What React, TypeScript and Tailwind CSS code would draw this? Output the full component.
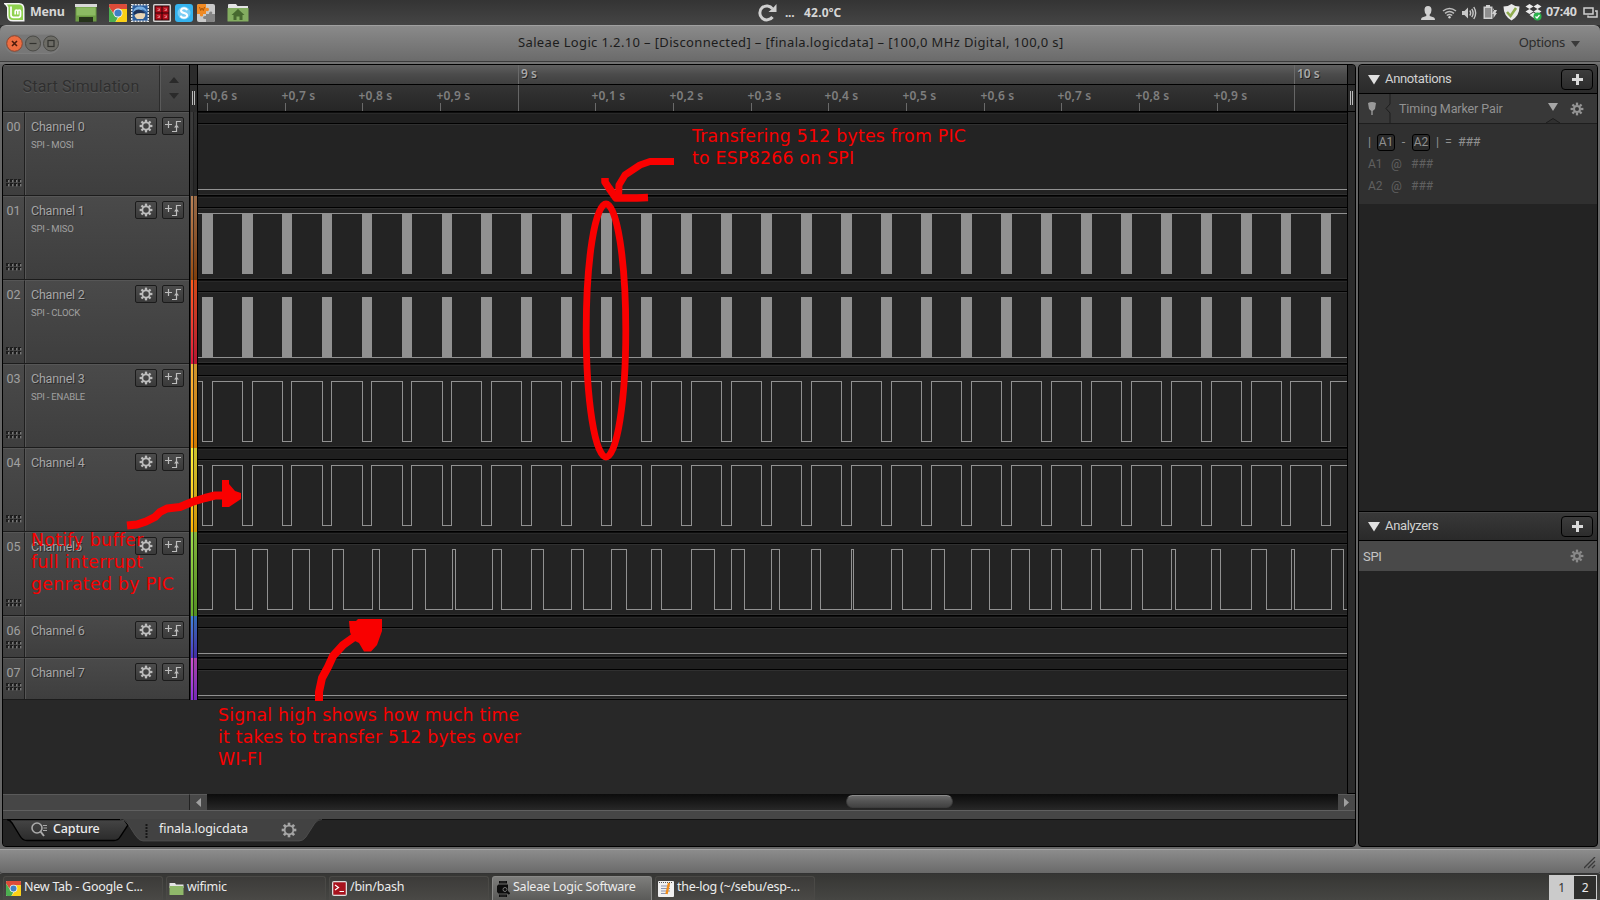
import React from "react";

const bursts: [number, number][] = [
  [202, 213], [242, 253], [282, 292], [322, 332], [362, 372], [402, 412], [442, 452],
  [481, 492], [521, 532], [561, 572], [601, 612], [641, 652], [681, 692], [721, 732],
  [761, 772], [801, 812], [841, 852], [881, 892], [921, 932], [961, 972], [1001, 1012],
  [1041, 1052], [1081, 1092], [1121, 1132], [1161, 1172], [1201, 1212], [1241, 1252],
  [1281, 1291], [1321, 1331],
];

const wifiPulses: [number, number][] = [
  [212, 235], [252, 267], [292, 309], [332, 343], [372, 379], [412, 425], [452, 455],
  [492, 501], [531, 543], [571, 583], [611, 626], [651, 661], [691, 714], [731, 744],
  [771, 779], [811, 820], [851, 853], [891, 902], [931, 944], [971, 989], [1011, 1029],
  [1051, 1061], [1091, 1100], [1131, 1142], [1171, 1175], [1211, 1220], [1251, 1266],
  [1291, 1294], [1331, 1343],
];

const ORIGIN = 198;

function highPulsesPath(pulses: [number, number][]) {
  let d = "M0 77.5";
  for (const [a, b] of pulses) {
    d += `H${a - ORIGIN + 0.5}V17.5H${b - ORIGIN + 0.5}V77.5`;
  }
  return d + "H1150";
}

function lowPulsesPath(pulses: [number, number][]) {
  let d = "M0 17.5";
  for (const [a, b] of pulses) {
    d += `H${a - ORIGIN + 0.5}V77.5H${b - 1 - ORIGIN + 0.5}V17.5`;
  }
  return d + "H1150";
}

type Kind = "flat" | "miso" | "clock" | "enable" | "wifi";

interface Channel {
  id: string;
  name: string;
  sub?: string;
  kind: Kind;
  small?: boolean;
  strip: string;
}

const channels: Channel[] = [
  { id: "00", name: "Channel 0", sub: "SPI - MOSI", kind: "flat", strip: "from-[#3c3c3c] to-[#2e2e2e]" },
  { id: "01", name: "Channel 1", sub: "SPI - MISO", kind: "miso", strip: "from-[#b98257] to-[#9a4c0c]" },
  { id: "02", name: "Channel 2", sub: "SPI - CLOCK", kind: "clock", strip: "from-[#ff5a1c] to-[#e0163c]" },
  { id: "03", name: "Channel 3", sub: "SPI - ENABLE", kind: "enable", strip: "from-[#fbb638] to-[#ff9500]" },
  { id: "04", name: "Channel 4", kind: "enable", strip: "from-[#fbf03a] to-[#ffb400]" },
  { id: "05", name: "Channel5", kind: "wifi", strip: "from-[#9fdb4a] to-[#66b02a]" },
  { id: "06", name: "Channel 6", kind: "flat", small: true, strip: "from-[#3f84dd] to-[#4f35c8]" },
  { id: "07", name: "Channel 7", kind: "flat", small: true, strip: "from-[#cf50d0] to-[#8f2fe0]" },
];

function Gear({ size = 14, color = "#bdbdbd", hole = 3.6, ring = 1.7 }: { size?: number; color?: string; hole?: number; ring?: number }) {
  return (
    <svg width={size} height={size} viewBox="-7 -7 14 14" className="shrink-0">
      <circle r={hole} fill="none" stroke={color} strokeWidth={ring} />
      {[0, 45, 90, 135, 180, 225, 270, 315].map((a) => (
        <rect key={a} x="-1.15" y="-6.4" width="2.3" height="2.4" fill={color} transform={`rotate(${a})`} />
      ))}
    </svg>
  );
}

function Dots() {
  return (
    <svg width="16" height="8" className="mb-px">
      {[0, 4, 8, 12].map((x) =>
        [0, 4].map((y) => (
          <g key={`${x}-${y}`}>
            <rect x={x} y={y} width="3" height="3" fill="#1d1d1d" />
            <rect x={x + 2} y={y + 1} width="1.4" height="2.4" fill="#777" />
          </g>
        )),
      )}
    </svg>
  );
}

function SmallButton({ children }: { children: React.ReactNode }) {
  return (
    <div className="flex h-[18px] w-[22px] items-center justify-center rounded-[2px] border border-[#1b1b1b] bg-linear-to-b from-[#4c4c4c] to-[#3a3a3a]">
      {children}
    </div>
  );
}

function ChannelHeader({ c }: { c: Channel }) {
  return (
    <div className={`flex border-b border-[#1c1c1c] bg-linear-to-b from-[#4a4a4a] to-[#3e3e3e] ${c.small ? "h-[42px]" : "h-[84px]"}`}>
      <div className="flex w-[22px] shrink-0 flex-col items-center justify-between border-r border-[#1f1f1f] border-t border-t-[#565656] pb-[7px] pt-[5px] text-[12.5px] leading-[17px] text-[#a0a0a0]">
        <span className={c.small ? "h-[14px]" : ""}>{c.id}</span>
        <Dots />
      </div>
      <div className="flex min-w-0 flex-1 justify-between border-l border-t border-[#565656] pl-[5px] pr-[5px]">
        <div className="pt-[5px]">
          <div className="whitespace-nowrap text-[12.5px] leading-[17px] tracking-[-0.2px] text-[#a6a6a6] [text-shadow:1px_1px_0_#2c2c2c]">{c.name}</div>
          {c.sub && <div className="mt-[4px] whitespace-nowrap text-[9.5px] leading-[12px] tracking-[-0.2px] text-[#a0a0a0]">{c.sub}</div>}
        </div>
        <div className="flex gap-[5px] pt-[4px]">
          <SmallButton><Gear size={14} /></SmallButton>
          <SmallButton>
            <svg width="18" height="14" viewBox="0 0 18 14" fill="none" stroke="#bdbdbd" strokeWidth="1.2">
              <path d="M1 5.5H8M4.500 2V9M8 12.500H12.500V2.500H17" />
              <path d="M10 8.500L12.500 5.500L15 8.500Z" fill="#bdbdbd" stroke="none" />
            </svg>
          </SmallButton>
        </div>
      </div>
    </div>
  );
}

function Wave({ c }: { c: Channel }) {
  const h = c.small ? 42 : 84;
  const low = c.small ? 37.5 : 77.5;
  return (
    <svg width="1149" height={h} className="block bg-[#232323]" shapeRendering="crispEdges">
      <rect width="1149" height="11" fill="#1f1f1f" />
      <rect width="1149" height="1" fill="#0e0e0e" />
      <rect y="1" width="1149" height="1" fill="#292929" />
      <rect y="11" width="1149" height="1" fill="#000" />
      <rect y="12" width="1149" height="1" fill="#303030" />
      <rect y={h - 2} width="1149" height="1" fill="#303030" />
      <rect y={h - 1} width="1149" height="1" fill="#000" />
      {c.kind === "flat" && <path d={`M0 ${low}H1149`} stroke="#919191" />}
      {(c.kind === "miso" || c.kind === "clock") && (
        <>
          <path d={c.kind === "miso" ? "M0 17.500H1149" : "M0 77.500H1149"} stroke="#919191" />
          {bursts.map(([a, b]) => (
            <rect key={a} x={a - ORIGIN} y="17" width={b - a} height="61" fill="#919191" />
          ))}
        </>
      )}
      {c.kind === "enable" && <path d={lowPulsesPath(bursts)} stroke="#919191" fill="none" />}
      {c.kind === "wifi" && <path d={highPulsesPath(wifiPulses)} stroke="#919191" fill="none" />}
    </svg>
  );
}

const minor: { label: string; w: string }[] = [
  { label: "+0,6 s", w: "w-[78px]" },
  { label: "+0,7 s", w: "w-[77px]" },
  { label: "+0,8 s", w: "w-[78px]" },
  { label: "+0,9 s", w: "w-[78px]" },
  { label: "", w: "w-[77px]" },
  { label: "+0,1 s", w: "w-[78px]" },
  { label: "+0,2 s", w: "w-[78px]" },
  { label: "+0,3 s", w: "w-[77px]" },
  { label: "+0,4 s", w: "w-[78px]" },
  { label: "+0,5 s", w: "w-[78px]" },
  { label: "+0,6 s", w: "w-[77px]" },
  { label: "+0,7 s", w: "w-[78px]" },
  { label: "+0,8 s", w: "w-[78px]" },
  { label: "+0,9 s", w: "w-[77px]" },
  { label: "", w: "w-[40px]" },
];

function Ruler() {
  return (
    <div className="font-['Noto_Sans'] text-[12px] font-semibold">
      <div className="flex h-[19px] bg-linear-to-b from-[#606060] from-0% via-[#4b4b4b] via-50% to-[#3f3f3f] pl-[320px] leading-[18px] text-[#a8a8a8]">
        <div className="w-[776px] border-l border-[#6a6a6a] pl-[2px] [text-shadow:1px_1px_0_#222]">9 s</div>
        <div className="border-l border-[#6a6a6a] pl-[2px] [text-shadow:1px_1px_0_#222]">10 s</div>
      </div>
      <div className="flex h-[28px] overflow-hidden border-y border-black bg-linear-to-b from-[#343434] to-[#262626] pl-[6px]">
        {minor.map((m, i) => (
          <div key={i} className={`shrink-0 ${m.w}`}>
            {m.label ? (
              <>
                <div className="-ml-[0.500px] h-[18px] whitespace-nowrap pt-px text-[12px] leading-[20px] tracking-[0.15px] text-[#7e7e7e]">{m.label}</div>
                <div className="ml-[3px] h-[8px] w-px bg-[#6a6a6a]" />
              </>
            ) : (
              <div className="ml-[3px] h-[26px] w-px bg-[#666]" />
            )}
          </div>
        ))}
      </div>
    </div>
  );
}

function Chrome({ size }: { size: number }) {
  return (
    <svg width={size} height={size} viewBox="0 0 18 18">
      <rect width="18" height="18" rx="1.5" fill="#e8e8e8" />
      <path d="M0 1.500Q0 0 1.500 0H16.500Q18 0 18 1.500V5H9L5.500 11L0 3Z" fill="#dd4b39" />
      <path d="M0 3L5.500 11.500L9 13L6.500 18H1.500Q0 18 0 16.500Z" fill="#4caf50" />
      <path d="M18 5V16.500Q18 18 16.500 18H6.500L12.500 10L9 5Z" fill="#fcd116" />
      <circle cx="9" cy="9" r="4.600" fill="#f1f1f1" />
      <circle cx="9" cy="9" r="3.600" fill="#3f7fc4" />
    </svg>
  );
}

function TopPanel() {
  return (
    <div className="flex h-[25px] shrink-0 items-center bg-linear-to-b from-[#343434] to-[#454545] font-['Noto_Sans'] text-[12.5px] font-bold text-[#d6d6d6]">
      <div className="flex w-[700px] items-center pl-[4px]">
        <svg width="21" height="19" viewBox="0 0 21 19">
          <path d="M0 0H15Q20.500 0 20.500 6V18.500H9Q3 18.500 3 12.500V4.500Q2 2 0 1Z" fill="#f4f4f4" />
          <path d="M3 1.500H15Q19 1.500 19 6V17H9Q4.500 17 4.500 12.500V4Z" fill="#8fd14f" />
          <path d="M7 3.500V12Q7 14.300 9.300 14.300H14.500Q16.500 14.300 16.500 12V8.500Q16.500 7 15.200 7T13.800 8.500V11.500M13.800 8.500Q13.800 7 12.500 7T11.200 8.500V11.500" fill="none" stroke="#fff" strokeWidth="1.700" />
        </svg>
        <span className="-mt-px ml-[5px] w-[45px] tracking-[-0.25px]">Menu</span>
        <svg width="22" height="18" viewBox="0 0 22 18">
          <rect x="0" y="0" width="22" height="3" fill="#d8d8d8" />
          <rect x="0.500" y="3" width="21" height="14.500" fill="#6d9c45" />
          <rect x="1.500" y="3.500" width="19" height="8" fill="#8cba63" />
          <rect x="4" y="13" width="14" height="5" fill="#26331b" />
        </svg>
        <div className="ml-[12px] flex gap-[4px]">
          <Chrome size={18} />
          <svg width="18" height="18" viewBox="0 0 18 18">
            <rect x="0.700" y="0.700" width="16.600" height="16.600" fill="#2b5d9b" stroke="#e6e6e6" strokeWidth="1.500" strokeDasharray="2 1" />
            <path d="M2 8Q3 2 10 2.500Q15 3 16 8L12 5.500Z" fill="#77aee0" />
            <path d="M2.500 8Q6 4.500 10 6L14 8.500L12 10Q6 8 3 11Z" fill="#1d3157" />
            <path d="M3.500 11Q7 8 14 9.500Q15 12 12 15H6Q3.500 13.500 3.500 11Z" fill="#e9d5b4" />
          </svg>
          <svg width="18" height="18" viewBox="0 0 18 18">
            <rect width="18" height="18" rx="1.500" fill="#d0d0d0" />
            <rect x="1.500" y="1.500" width="15" height="15" fill="#2a0507" />
            <path d="M2.500 2.500h6v6h-6zM9.500 2.500h6v6h-6zM2.500 9.500h6v6h-6zM9.500 9.500h6v6h-6z" fill="#b50f1c" />
            <path d="M4.500 4l2 2M6.500 4.500v2h-2M11.500 4l2 2M13.500 4.500v2h-2M4.500 11l2 2M6.500 11.500v2h-2M11.500 11l2 2M13.500 11.500v2h-2" stroke="#e89098" strokeWidth="0.800" fill="none" />
          </svg>
          <svg width="18" height="18" viewBox="0 0 18 18">
            <rect width="18" height="18" rx="3" fill="#35b3ee" />
            <circle cx="9" cy="9" r="6.500" fill="#fff" opacity="0.350" />
            <path d="M12 6.200Q11.500 4.300 9 4.300T6 6.500Q6 8.300 9 8.900T12.200 11.500Q12 13.700 9 13.700T5.800 11.600" fill="none" stroke="#fff" strokeWidth="2" />
          </svg>
          <svg width="18" height="18" viewBox="0 0 18 18">
            <rect width="18" height="18" rx="2" fill="#c9c9c9" />
            <path d="M0 2Q0 0 2 0H9V4Q12 3 12 5.500T9 7V10H6Q6.500 12.500 4.500 12.500T3 10H0Z" fill="#f08a24" />
            <path d="M2.500 3L3.700 6.500L5 4L6.300 6.500L7.500 3" stroke="#a85508" fill="none" />
            <path d="M9 10H12Q12 7 14 7.500T15 10H18V16Q18 18 16 18H9V15Q6 15.500 6 13.500T9 12Z" fill="#858585" />
          </svg>
        </div>
        <svg width="22" height="18" viewBox="0 0 22 18" className="ml-[12px]">
          <path d="M1 1Q1 0 2 0H9L10.500 2H21V6H1Z" fill="#e4e4e4" />
          <rect x="0.500" y="4" width="21" height="13.500" rx="0.500" fill="#83ad60" />
          <path d="M11 5L4.500 11H6.500V16H9.500V12.500H12.500V16H15.500V11H17.500Z" fill="#46682f" />
        </svg>
      </div>
      <div className="flex w-[721px] items-center pl-[57px] text-[12px]">
        <svg width="21" height="18" viewBox="0 0 21 18" fill="none" stroke="#cfcfcf" strokeWidth="3">
          <path d="M15.500 4.800A7 7 0 1 0 15.500 13" />
          <path d="M19.500 0V8H11.500L16 4Z" fill="#cfcfcf" stroke="none" />
        </svg>
        <span className="ml-[7px] w-[19px] tracking-[-0.3px]">...</span>
        <span className="tracking-[0.2px]">42.0ºC</span>
      </div>
      <div className="flex flex-1 items-center">
        <svg width="14" height="14" viewBox="0 0 14 14" fill="#d0d0d0">
          <path d="M7 0Q10.500 0 10.500 4Q10.500 7 8.700 8.500V10L13 11.500Q14 12 14 14H0Q0 12 1 11.500L5.300 10V8.500Q3.500 7 3.500 4Q3.500 0 7 0Z" />
        </svg>
        <svg width="15" height="12" viewBox="0 0 15 12" className="ml-[7px]" fill="none" stroke="#bcbcbc" strokeWidth="1.500">
          <path d="M1 4Q7.500 -1 14 4" /><path d="M3 6.300Q7.500 2.700 12 6.300" /><path d="M4.800 8.500Q7.500 6.400 10.200 8.500" />
          <circle cx="7.500" cy="10.300" r="1.200" fill="#d0d0d0" stroke="none" />
        </svg>
        <svg width="15" height="14" viewBox="0 0 15 14" className="ml-[5px]" fill="none" stroke="#c8c8c8" strokeWidth="1.400">
          <path d="M0 5H2.500L6 1.500V12.500L2.500 9H0Z" fill="#c8c8c8" stroke="none" />
          <path d="M7.800 4.500Q9.500 7 7.800 9.500M9.800 2.800Q12.500 7 9.800 11.200M11.800 1Q15.500 7 11.800 13" />
        </svg>
        <svg width="15" height="15" viewBox="0 0 15 15" className="ml-[6px]">
          <path d="M3 1.500V0H7V1.500H9.500V14H0.500V1.500Z" fill="#cfcfcf" />
          <rect x="2" y="3" width="6" height="9.500" fill="#8f8f8f" />
          <path d="M10 3V5H14L12.500 8H14L10.500 13V9H9L11 5Z" fill="#cfcfcf" />
        </svg>
        <svg width="17" height="17" viewBox="0 0 17 17" className="ml-[5px]">
          <path d="M8.500 0Q12 2.500 16.500 2.500Q16.500 12 8.500 16.500Q0.500 12 0.500 2.500Q5 2.500 8.500 0Z" fill="#e9e9e9" />
          <path d="M4 8L7.500 12L13 4" fill="none" stroke="#8fac4e" strokeWidth="2.600" />
        </svg>
        <svg width="17" height="17" viewBox="0 0 17 17" className="ml-[5px]">
          <path d="M4.500 0L8.500 2.500L4.500 5L0.500 2.500ZM12.500 0L16.500 2.500L12.500 5L8.500 2.500ZM4.500 5L8.500 7.500L4.500 10L0.500 7.500ZM12.500 5L16.500 7.500L12.500 10L8.500 7.500ZM4.500 11L8.500 8.500L12 11L8.500 14Z" fill="#ececec" />
          <circle cx="12.500" cy="12.500" r="4" fill="#2bb24c" />
          <path d="M10.500 12.500L12 14L14.500 11" stroke="#fff" fill="none" strokeWidth="1.200" />
        </svg>
        <span className="ml-[4px] w-[37px] text-[12.5px] tracking-[-0.3px]">07:40</span>
        <svg width="15" height="11" viewBox="0 0 15 11" fill="none" stroke="#cfcfcf" strokeWidth="1.500">
          <path d="M1 1H10V7H1Z" /><path d="M12 4H14V10H5V8.500" />
        </svg>
      </div>
    </div>
  );
}

function TitleBar() {
  return (
    <div className="shrink-0 bg-[#2e2e2e]">
      <div className="flex h-[37px] items-center rounded-t-[6px] border-b border-[#3c3c3c] border-t border-t-[#a0a0a0] bg-linear-to-b from-[#8a8a8a] to-[#6b6b6b]">
        <div className="ml-[6px] flex h-[18px] gap-[2px] rounded-full bg-[#777] shadow-[0_0_0_1px_#7e7e7e]">
          <svg width="17" height="17" viewBox="0 0 17 17">
            <circle cx="8.500" cy="8.500" r="7.800" fill="#ee6d40" stroke="#8a4630" />
            <path d="M6 6L11 11M11 6L6 11" stroke="#4d1b0b" strokeWidth="1.600" />
          </svg>
          <svg width="16" height="17" viewBox="0 0 16 17">
            <circle cx="8" cy="8.500" r="7.500" fill="#6d6c66" stroke="#4a4a46" />
            <path d="M4.500 8.500H11.500" stroke="#33332f" strokeWidth="1.200" />
          </svg>
          <svg width="16" height="17" viewBox="0 0 16 17">
            <circle cx="8" cy="8.500" r="7.500" fill="#6d6c66" stroke="#4a4a46" />
            <rect x="5" y="5.500" width="6" height="6" fill="none" stroke="#33332f" strokeWidth="1.200" />
          </svg>
        </div>
        <div className="flex-1 whitespace-nowrap pb-[2px] pl-[459px] font-['Noto_Sans'] text-[13px] tracking-[0.36px] text-[#1c1c1c]">
          Saleae Logic 1.2.10 – [Disconnected] – [finala.logicdata] – [100,0 MHz Digital, 100,0 s]
        </div>
        <div className="flex items-center gap-[6px] pb-[2px] pr-[20px] font-['Noto_Sans'] text-[13px] tracking-[-0.3px] text-[#2c2c2c]">
          Options
          <svg width="9" height="6" className="mt-[2px]"><path d="M0 0H9L4.500 6Z" fill="#3a3a3a" /></svg>
        </div>
      </div>
      <div className="h-[2px] bg-[#727272]" />
    </div>
  );
}

function PanelHeader({ title }: { title: string }) {
  return (
    <div className="flex h-[29px] items-center border-b border-black border-t border-t-[#454545] bg-linear-to-b from-[#383838] to-[#2a2a2a] pl-[9px] pr-[4px]">
      <svg width="12" height="10"><path d="M0 0H12L6 9.500Z" fill="#e0e0e0" /></svg>
      <span className="ml-[5px] flex-1 pb-[2px] text-[13px] tracking-[-0.35px] text-[#d0d0d0]">{title}</span>
      <div className="flex h-[21px] w-[32px] items-center justify-center rounded-[4px] border border-black bg-linear-to-b from-[#3c3c3c] to-[#2c2c2c]">
        <svg width="11" height="11"><path d="M4 0H7V4H11V7H7V11H4V7H0V4H4Z" fill="#dadada" /></svg>
      </div>
    </div>
  );
}

function RightPanel() {
  return (
    <div className="ml-[2px] mr-[2px] flex h-[783px] w-[240px] flex-col overflow-hidden rounded-[4px] border border-black bg-[#232323]">
      <PanelHeader title="Annotations" />
      <div className="flex h-[30px] items-center border-b border-[#1e1e1e] bg-[#383838] pl-[9px]">
        <svg width="8" height="13"><path d="M0 1Q4 -1 8 1L7 7L4.700 9V13H3.300V9L1 7Z" fill="#999" /></svg>
        <svg width="6" height="29" className="ml-[9px]" fill="none" stroke="#1d1d1d"><path d="M5 0V10L1 14.500L5 19V29" /></svg>
        <span className="ml-[8px] flex-1 pt-[2px] text-[12.5px] tracking-[-0.1px] text-[#929292]">Timing Marker Pair</span>
        <div className="flex h-full w-[14px] flex-col items-center justify-between pt-[9px]">
          <svg width="10" height="9" className="shrink-0"><path d="M0 0H10L5 8Z" fill="#a6a6a6" /></svg>
          <svg width="14" height="5" className="shrink-0"><path d="M0 5L7 0.500L14 5" fill="#303030" stroke="#1e1e1e" /></svg>
        </div>
        <div className="ml-[10px] mr-[13px]"><Gear size={14} color="#959595" hole={3} ring={2} /></div>
      </div>
      <div className="h-[80px] bg-[#303030] pl-[9px] pt-[7px] text-[12.5px] text-[#909090]">
        <div className="flex h-[22px] items-center">
          <span className="w-[9px]">|</span>
          <span className="flex h-[17px] w-[18px] items-center justify-center rounded-[3px] border border-black bg-[#2a2a2a] text-[12px]">A1</span>
          <span className="w-[17px] text-center">-</span>
          <span className="flex h-[17px] w-[18px] items-center justify-center rounded-[3px] border border-black bg-[#2a2a2a] text-[12px]">A2</span>
          <span className="w-[15px] text-center">|</span>
          <span className="w-[7px] text-center">=</span>
          <span className="ml-[6px] tracking-[-0.3px]">###</span>
        </div>
        {["A1", "A2"].map((m) => (
          <div key={m} className="flex h-[22px] items-center text-[12px] text-[#606060]">
            <span className="w-[23px]">{m}</span>
            <span className="w-[20px]">@</span>
            <span>###</span>
          </div>
        ))}
      </div>
      <div className="h-[308px] border-b border-black" />
      <PanelHeader title="Analyzers" />
      <div className="flex h-[30px] items-center bg-[#494949] pl-[4px] pr-[13px] text-[13px] tracking-[-0.3px] text-[#c4c4c4]">
        <span className="flex-1 pt-px">SPI</span>
        <Gear size={14} color="#8a8a8a" hole={3} ring={2} />
      </div>
    </div>
  );
}

function MainPanel() {
  return (
    <div className="ml-[2px] flex h-[783px] w-[1354px] flex-col overflow-hidden rounded-[4px] border border-black bg-[#282828]">
      <div className="flex h-[729px]">
        <div className="w-[186px] shrink-0">
          <div className="flex h-[47px] border-b border-[#1c1c1c] bg-linear-to-b from-[#4d4d4d] to-[#404040]">
            <div className="flex w-[157px] items-center justify-center border-r border-[#2c2c2c] border-t border-t-[#5a5a5a] pb-[4px] text-[16px] tracking-[0.15px] text-[#2f2f2f] [text-shadow:0_1px_0_#5a5a5a]">
              Start Simulation
            </div>
            <div className="flex flex-1 flex-col items-center justify-center gap-[10px] border-l border-t border-[#5a5a5a] pb-[2px] pr-[2px]">
              <svg width="10" height="6"><path d="M0 6H10L5 0Z" fill="#2a2a2a" /></svg>
              <svg width="10" height="6"><path d="M0 0H10L5 6Z" fill="#2a2a2a" /></svg>
            </div>
          </div>
          {channels.map((c) => <ChannelHeader key={c.id} c={c} />)}
        </div>
        <div className="flex w-[9px] shrink-0 flex-col">
          <div className="h-[47px] border-x border-black bg-[#2b2b2b]">
            <svg width="7" height="46" shapeRendering="crispEdges">
              <path d="M0 19.500H7M0 46.500H7" stroke="#000" />
              <path d="M2.500 26V40M4.500 26V40" stroke="#bbb" />
            </svg>
          </div>
          {channels.map((c) => (
            <div key={c.id} className={`flex border-x border-black bg-[#333] pl-px ${c.small ? "h-[42px]" : "h-[84px]"}`}>
              <div className={`w-[2px] bg-linear-to-b ${c.strip}`} />
              <div className={`w-[4px] border-l border-[#222]/80 bg-linear-to-b brightness-[0.82] ${c.strip}`} />
            </div>
          ))}
        </div>
        <div className="w-[1149px] shrink-0">
          <Ruler />
          {channels.map((c) => <Wave key={c.id} c={c} />)}
        </div>
        <div className="flex w-[8px] flex-col border-b border-l border-black bg-[#2b2b2b]">
          <svg width="7" height="47" shapeRendering="crispEdges">
            <path d="M0 19.500H7M0 46.500H7" stroke="#000" />
            <path d="M2.500 26V40M4.500 26V40" stroke="#bbb" />
          </svg>
        </div>
      </div>
      <div className="flex h-[16px] shrink-0">
        <div className="w-[187px] border-r border-[#222] border-t border-t-[#5a5a5a] bg-[#464646]" />
        <div className="flex w-[17px] items-center justify-center border-t border-[#5a5a5a] bg-[#484848]">
          <svg width="5" height="9"><path d="M5 0V9L0 4.500Z" fill="#a0a0a0" /></svg>
        </div>
        <div className="flex-1 bg-linear-to-b from-[#0c0c0c] to-[#282828] pl-[639px] pt-px">
          <div className="h-[13px] w-[107px] rounded-full border border-[#3c3c3c] border-t-[#8a8a8a] bg-linear-to-b from-[#6a6a6a] via-[#555] via-45% to-[#424242]" />
        </div>
        <div className="flex w-[17px] items-center justify-center border-t border-[#5a5a5a] bg-[#484848]">
          <svg width="5" height="9"><path d="M0 0V9L5 4.500Z" fill="#a0a0a0" /></svg>
        </div>
      </div>
      <div className="h-[9px] shrink-0 border-t border-[#606060] bg-[#464646]" />
      <div className="grid flex-1 bg-[#232323] font-['Noto_Sans'] text-[12.5px] text-[#ececec]">
        <svg width="1352" height="26" className="col-start-1 row-start-1 block">
          <defs>
            <linearGradient id="tab" x1="0" y1="0" x2="0" y2="1">
              <stop offset="0" stopColor="#454545" />
              <stop offset="1" stopColor="#2b2b2b" />
            </linearGradient>
          </defs>
          <path d="M0 0.500H1352" stroke="#111" />
          <path d="M4 0.500Q7 1 9 4L17 17Q19.500 21.500 24 21.500H111Q115 21.500 117 18L125 6L121 0.500Z" fill="url(#tab)" stroke="#000" strokeWidth="1.400" />
          <path d="M117 0Q122 0 125 5L132 16Q136 22 140 22H296Q300 22 303 18L312 4Q315 0 319 0Z" fill="#424242" />
          <path d="M117 0.500Q122 0.500 125 5L132 16Q136 22 140 22H296Q300 22 303 18L312 4Q315 0.500 319 0.500" fill="none" stroke="#555" strokeWidth="0.700" />
        </svg>
        <div className="col-start-1 row-start-1 flex h-[21px] items-center pl-[28px]">
          <svg width="16" height="15" viewBox="0 0 16 15" fill="none" stroke="#aaa" strokeWidth="1.600">
            <circle cx="6" cy="6" r="5" /><path d="M9.500 9.500L13 14" strokeWidth="2" /><path d="M12 3.500H16M12.500 6H16M12 8.500H16" strokeWidth="1" />
          </svg>
          <span className="ml-[6px] w-[92px] font-medium tracking-[-0.150px]">Capture</span>
          <svg width="3" height="14" className="mt-[2px]"><path d="M1.500 0V14" stroke="#161616" strokeWidth="2" strokeDasharray="2 1" /></svg>
          <span className="ml-[11px] w-[122px] tracking-[-0.050px]">finala.logicdata</span>
          <Gear size={16} color="#a5a5a5" hole={3.8} ring={1.5} />
        </div>
      </div>
    </div>
  );
}

function Marks() {
  return (
    <div className="pointer-events-none absolute inset-0 font-['DejaVu_Sans'] text-[17.3px] leading-[22px] tracking-[0.25px] text-[#f90000]">
      <svg width="1600" height="900" className="absolute inset-0" fill="none" stroke="#f90000" strokeWidth="7" strokeLinejoin="round">
        <path d="M674 161.500H650L640 165L625 175L619 185L618.500 197" />
        <path d="M605 178V182L609 188L616 198H637L648 197.500" strokeWidth="7.500" />
        <ellipse cx="606" cy="330.500" rx="19.800" ry="126.500" strokeWidth="6.800" />
        <path d="M127 525.500L137 524.500L146 521.500L155 517L160 512L167 508.500L180 507L192 502L205 498L215 495.500H226" strokeWidth="8" />
        <path d="M222 480H229V484L235 491L241 493V499L229 507H222Z" fill="#f90000" stroke="none" />
        <path d="M319 701V692L322 678L328 667L333 656L343 645L357 635" strokeWidth="8" />
        <path d="M349 621H356L358 619H382V631L377 645L371 651.500H364L359 643L353 640L350 632Z" fill="#f90000" stroke="none" />
      </svg>
      <div className="absolute left-[692px] top-[125px] whitespace-nowrap">Transfering 512 bytes from PIC<br />to ESP8266 on SPI</div>
      <div className="absolute left-[31px] top-[529px] whitespace-nowrap tracking-[0.320px]">Notify buffer<br />full interrupt<br />genrated by PIC</div>
      <div className="absolute left-[218px] top-[704px] whitespace-nowrap tracking-[0.210px]">Signal high shows how much time<br />it takes to transfer 512 bytes over<br />WI-FI</div>
    </div>
  );
}

function Task({ icon, children, active, pad = "pl-[2px]" }: { icon: React.ReactNode; children: React.ReactNode; active?: boolean; pad?: string }) {
  return (
    <div className={`flex h-[24px] w-[160px] items-center gap-[3px] rounded-t-[3px] border border-b-0 ${pad} ${active ? "border-[#8a8a88] bg-linear-to-b from-[#7e7e7c] to-[#5a5a58]" : "border-[#4a4946] bg-linear-to-b from-[#3c3b39] to-[#4a4946]"}`}>
      {icon}
      <span className="whitespace-nowrap pb-[2px]">{children}</span>
    </div>
  );
}

function Taskbar() {
  return (
    <div className="flex h-[26px] items-end gap-[3px] bg-linear-to-b from-[#363634] to-[#464643] pl-[3px] font-['Noto_Sans'] text-[12.5px] tracking-[-0.250px] text-[#ececec]">
      <Task icon={<Chrome size={15} />}>New Tab - Google C...</Task>
      <Task icon={<svg width="15" height="14" viewBox="0 0 15 14"><path d="M0.500 1H6L7 2.500H14.500V6H0.500Z" fill="#e4e4e4" /><rect x="0.500" y="4" width="14" height="9" fill="#8fb86a" /></svg>}>wifimic</Task>
      <Task icon={<svg width="15" height="15" viewBox="0 0 15 15"><rect width="15" height="15" rx="2" fill="#ddd" /><rect x="1.300" y="1.300" width="12.400" height="12.400" fill="#a8121d" /><path d="M3 4L6.500 6.500L3 9M7.500 10.500H12" stroke="#fff" fill="none" strokeWidth="1.200" /></svg>}>/bin/bash</Task>
      <Task active pad="pl-[4px]" icon={<svg width="13" height="16" viewBox="0 0 13 16"><path d="M2 0H10V2.500H2ZM1.500 3.500H11V12.500H1.500L0 11V5ZM2 13.500H10V16H2Z" fill="#0c0c0c" /><path d="M4 0V2.500M6 0V2.500M8 0V2.500M4 13.500V16M6 13.500V16M8 13.500V16" stroke="#555" strokeWidth="0.500" /><circle cx="8" cy="8.500" r="2" fill="none" stroke="#777" /><path d="M9.500 10L12.500 13" stroke="#0c0c0c" strokeWidth="2" /></svg>}>Saleae Logic Software</Task>
      <Task pad="pl-[2px]" icon={<svg width="16" height="16" viewBox="0 0 16 16"><rect width="16" height="16" rx="1" fill="#f0f0f0" /><path d="M1 1.500H15" stroke="#555" strokeDasharray="1 1" /><path d="M3 5H12M3 7.500H12M3 10H12M3 12.500H9" stroke="#8a93b0" /><path d="M11 2L8.500 13" stroke="#f08c1a" strokeWidth="2.400" /></svg>}>the-log (~/sebu/esp-...</Task>
      <div className="ml-auto mr-[3px] flex h-[25px] text-[12px]">
        <div className="flex w-[25px] items-center justify-center bg-[#cbcbcb] text-[#333]">1</div>
        <div className="flex w-[23px] items-center justify-center border border-l-0 border-[#cbcbcb] bg-[#2e2e2c]">2</div>
      </div>
    </div>
  );
}

export default function App() {
  return (
    <div className="relative flex h-[900px] w-[1600px] flex-col overflow-hidden bg-[#666] font-[Roboto,sans-serif]">
      <TopPanel />
      <TitleBar />
      <div className="flex h-[783px] shrink-0">
        <MainPanel />
        <RightPanel />
      </div>
      <div className="h-[27px] shrink-0 bg-[#666] pt-[2px]">
        <div className="flex h-[25px] items-end justify-end rounded-b-[3px] border-b border-[#333] border-t border-t-[#a2a2a2] bg-linear-to-b from-[#8c8c8c] to-[#6a6a6a] pb-[4px] pr-[4px]">
          <svg width="12" height="12" stroke="#3a3a3a" strokeWidth="1.300"><path d="M0 11L11 0M4 11L11 4M8 11L11 8" /></svg>
        </div>
      </div>
      <Taskbar />
      <Marks />
    </div>
  );
}
